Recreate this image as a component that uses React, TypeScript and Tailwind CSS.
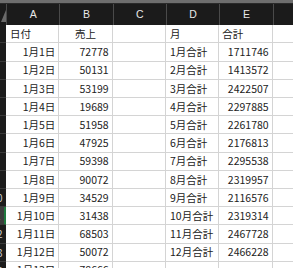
const colLetters = ["A", "B", "C", "D", "E", ""];

type Row = { n: number; a: string; b: string; d: string; e: string };

const sales = [
  72778, 50131, 53199, 19689, 51958, 47925, 59398, 90072, 34529, 31438, 68503,
  50072, 78666,
];
const totals = [
  1711746, 1413572, 2422507, 2297885, 2261780, 2176813, 2295538, 2319957,
  2116576, 2319314, 2467728, 2466228,
];

const rows: Row[] = sales.map((s, i) => ({
  n: i + 2,
  a: `1月${i + 1}日`,
  b: String(s),
  d: i < 12 ? `${i + 1}月合計` : "",
  e: i < 12 ? String(totals[i]) : "",
}));

const cell =
  "flex items-center border-r border-b border-[#d4d4d4] overflow-hidden whitespace-nowrap";

// row header is scrolled so only its right edge shows; numbers sit centred in a wider box
function RowHead({ n, active }: { n: number; active?: boolean }) {
  return (
    <div
      className={`flex items-center justify-end overflow-hidden border-b border-[#3a3a3a] text-[10px] text-[#cfcfcf] ${
        active ? "bg-[#3d3d3d] border-r-2 border-r-[#1f7a3f]" : "bg-[#1c1c1c]"
      }`}
    >
      <span className="w-[24px] mr-[-3px] shrink-0 text-center">{n}</span>
    </div>
  );
}

export default function App() {
  return (
    <div
      className="w-[293px] h-[268px] overflow-hidden bg-white text-[10.5px] text-[#222]"
      style={{ fontFamily: '"Noto Sans CJK JP", "Liberation Sans", sans-serif' }}
    >
      {/* top edge */}
      <div className="h-[4px] bg-[#6e6e6e] border-b border-[#2a2a2a]" />

      {/* column header */}
      <div className="grid grid-cols-[6px_repeat(5,53.33px)_1fr] h-[21.3px] bg-[#1b1b1b]">
        <div className="relative">
          <svg className="absolute right-0 bottom-[3px]" width="5" height="12" viewBox="0 0 5 12">
            <polygon points="5,0 5,12 0,12" fill="#6a6a6a" />
          </svg>
        </div>
        {colLetters.map((c, i) => (
          <div
            key={i}
            className="flex items-center justify-center border-l border-[#4a4a4a] text-[10.5px] text-[#e8e8e8]"
            style={{ fontFamily: '"Liberation Sans", sans-serif' }}
          >
            {c}
          </div>
        ))}
      </div>

      {/* first row with titles */}
      <div className="grid grid-cols-[6px_repeat(5,53.33px)_1fr] h-[18.2px]">
        <RowHead n={1} />
        <div className={`${cell} pl-[4px]`}>日付</div>
        <div className={`${cell} justify-center`}>売上</div>
        <div className={cell} />
        <div className={`${cell} pl-[4px]`}>月</div>
        <div className={`${cell} pl-[3px]`}>合計</div>
        <div className="border-b border-[#d4d4d4]" />
      </div>

      {rows.map((r) => (
        <div key={r.n} className="grid grid-cols-[6px_repeat(5,53.33px)_1fr] h-[18.2px]">
          <RowHead n={r.n} active={r.n === 11} />
          <div className={`${cell} justify-end pr-[3px]`}>{r.a}</div>
          <div className={`${cell} justify-end pr-[3px]`}>{r.b}</div>
          <div className={cell} />
          <div className={`${cell} pl-[4px]`}>{r.d}</div>
          <div className={`${cell} justify-end pr-[3px]`}>{r.e}</div>
          <div className="border-b border-[#d4d4d4]" />
        </div>
      ))}
    </div>
  );
}
